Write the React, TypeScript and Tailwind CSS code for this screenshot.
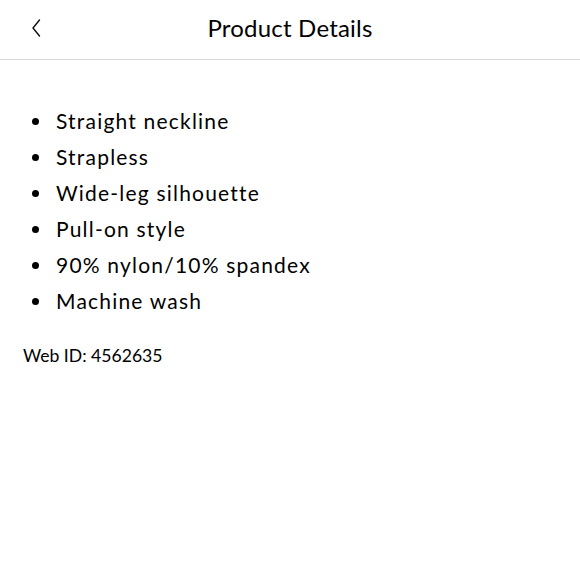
import React from 'react';

const features = [
  'Straight neckline',
  'Strapless',
  'Wide-leg silhouette',
  'Pull-on style',
  '90% nylon/10% spandex',
  'Machine wash',
];

const App: React.FC = () => {
  return (
    <div className="w-[580px] h-[580px] bg-white text-black" style={{ fontFamily: 'Lato, "Noto Sans", sans-serif' }}>
      <header className="relative flex h-[60px] items-center justify-center border-b border-[#dcdcdc]">
        <button className="absolute left-[27px] top-[16px] flex h-[24px] w-[18px] items-center justify-center">
          <svg width="12" height="20" viewBox="0 0 12 20" fill="none">
            <path d="M9.5 2 L3 10 L9.5 18" stroke="#111" strokeWidth="1.4" strokeLinecap="round" strokeLinejoin="round" />
          </svg>
        </button>
        <h1 className="mt-[-4px] text-[24px] font-normal tracking-[0.2px]">Product Details</h1>
      </header>

      <main className="px-[23px] pt-[43px]">
        <ul className="flex flex-col">
          {features.map(f => (
            <li key={f} className="flex h-[36px] items-center text-[21px] tracking-[1.2px]">
              <span className="ml-[9px] mr-[17px] h-[7px] w-[7px] rounded-full bg-black" />
              <span>{f}</span>
            </li>
          ))}
        </ul>
        <p className="mt-[24px] text-[17.6px]">Web ID: 4562635</p>
      </main>
    </div>
  );
};

export default App;
